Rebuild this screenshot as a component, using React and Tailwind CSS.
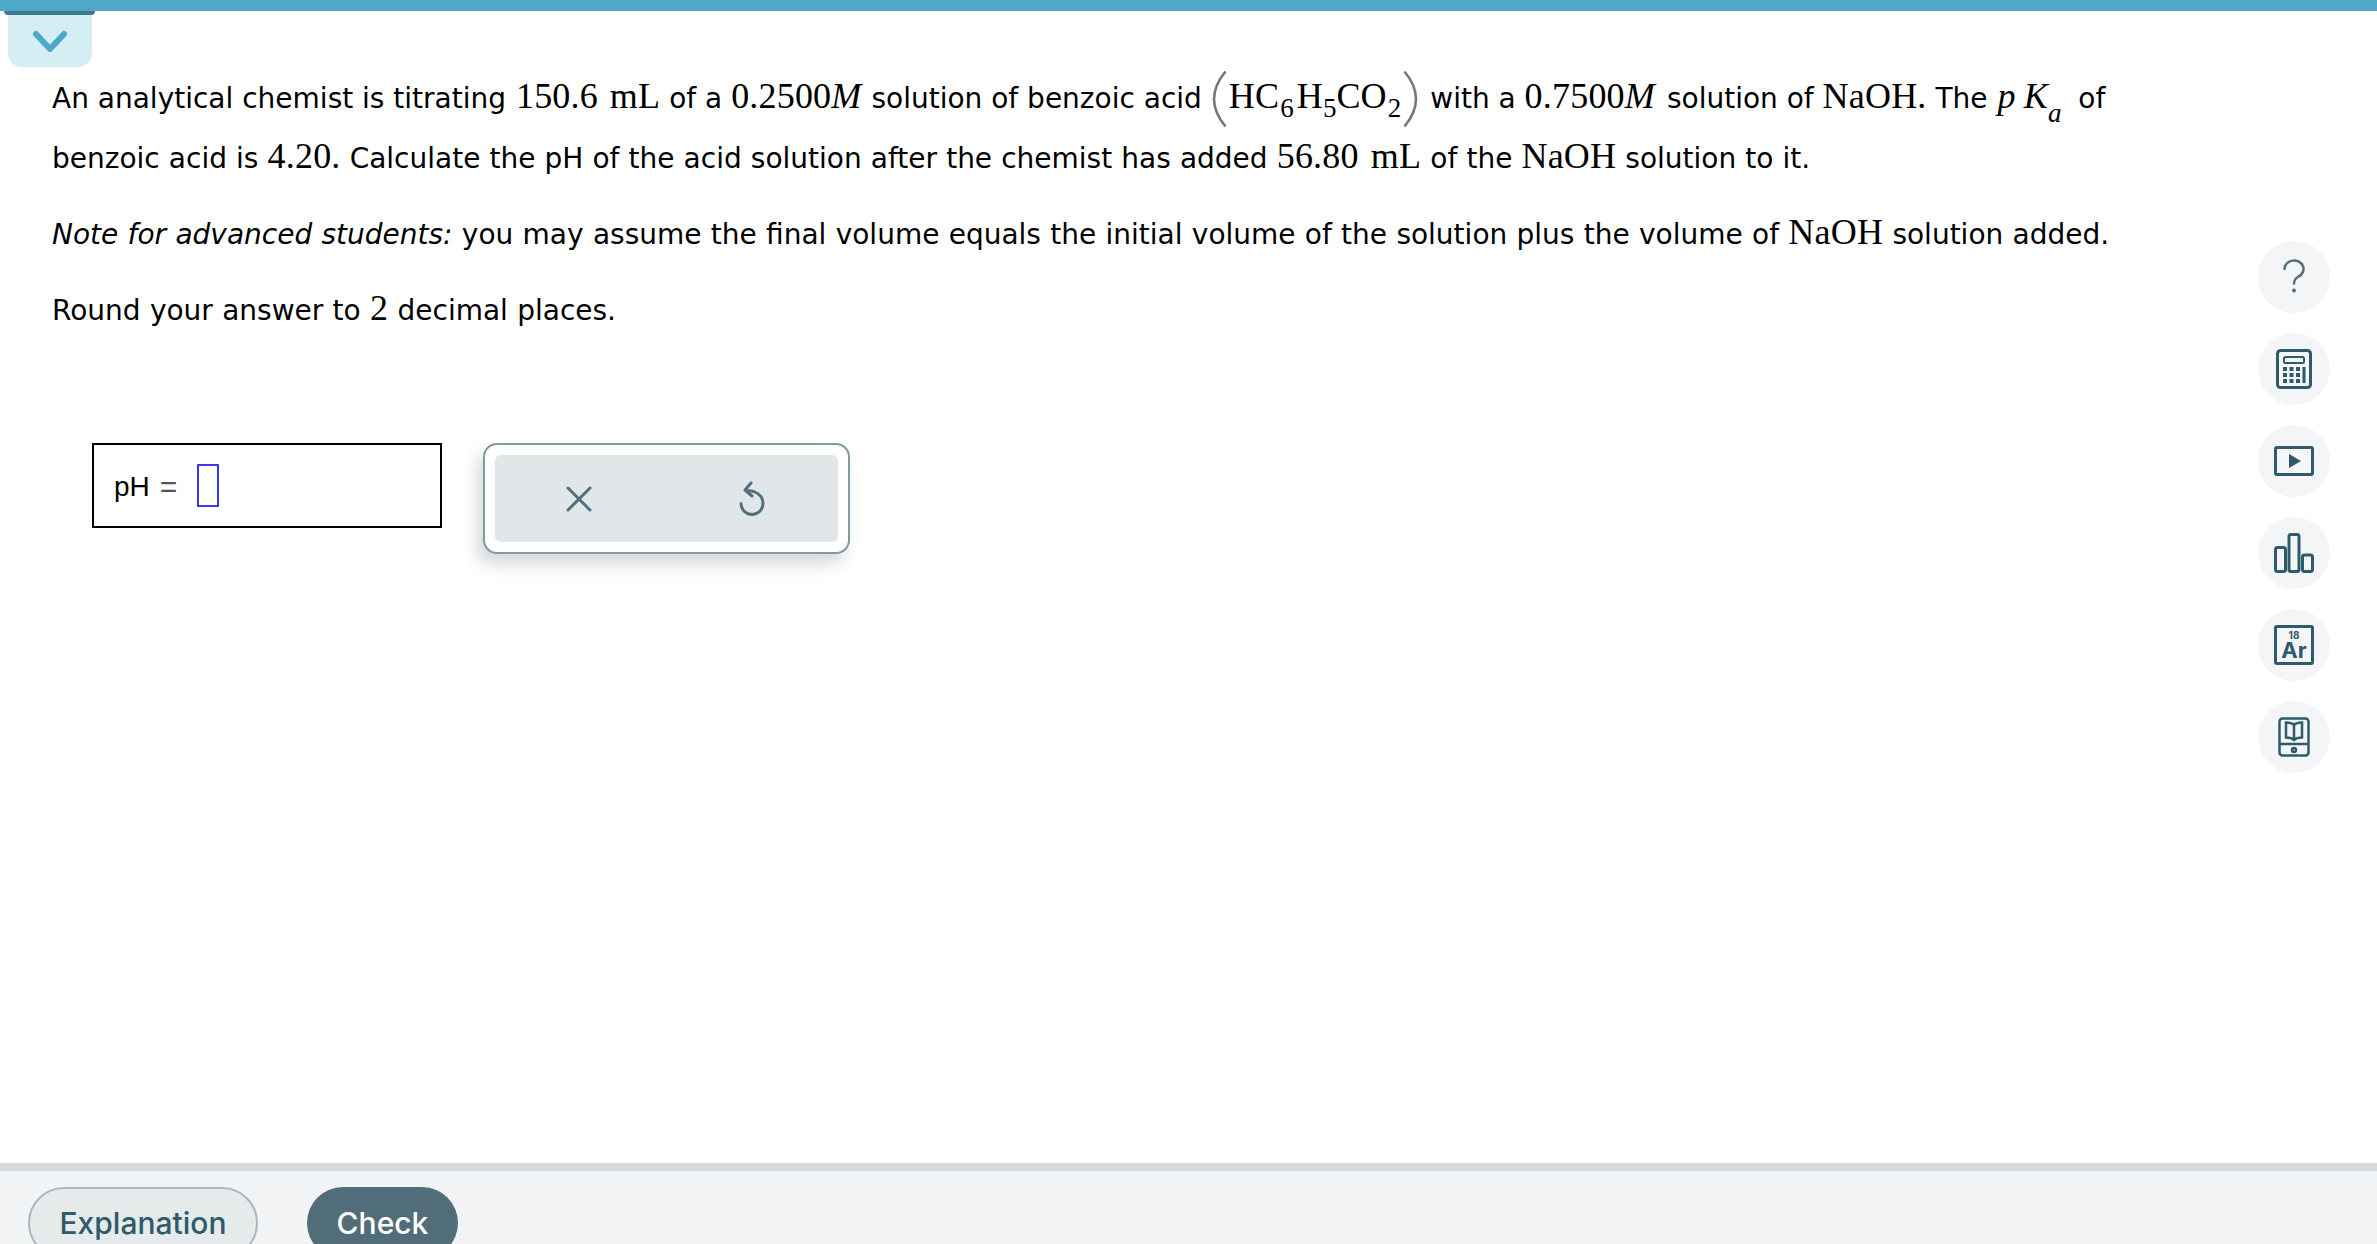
import React from 'react';

const M = ({ children, i, className = '' }) => (
    <span className={`font-['Liberation_Serif',serif] text-[36px] leading-none tracking-[0.2px] ${i ? 'italic' : ''} ${className}`}>{children}</span>
);

const Sub = ({ children, i, className = 'align-[-9px]' }) => (
    <span className={`font-['Liberation_Serif',serif] text-[27px] leading-none ${i ? 'italic' : ''} ${className}`}>
        {children}
    </span>
);

const Paren = ({ flip }) => (
    <svg width="18" height="58" viewBox="0 0 18 58" className={`inline-block align-[-20px] ${flip ? '-scale-x-100' : ''}`}>
        <path d="M14.500 1.500C5 13 3 21 3 29s2 16 11.500 27.500" fill="none" stroke="#777" strokeWidth="2.600" />
    </svg>
);

const RailButton = ({ children }) => (
    <div className="w-[72px] h-[72px] rounded-full bg-[#f3f5f6] flex items-center justify-center text-[#2f5a6b]">
        {children}
    </div>
);

export default function App() {
    return (
        <div className="h-screen overflow-hidden flex flex-col bg-white text-black font-['DejaVu_Sans',sans-serif] text-[28px]">
            <div className="h-[11px] shrink-0 bg-[#4fa8c7]" />

            <div className="flex-1 flex min-h-0">
                <div className="flex-1 min-w-0">
                    <div className="ml-2 w-[84px] h-[56px] bg-[#d4eef4] rounded-b-[14px] flex items-center justify-center relative">
                        <div className="absolute top-0 -left-1 -right-[3px] h-1 bg-[#3b7a91] rounded-b-sm" />
                        <svg width="36" height="24" viewBox="0 0 36 24" className="mt-1">
                            <path d="M4 5l14 15L32 5" fill="none" stroke="#4fa8c7" strokeWidth="6" strokeLinecap="round" strokeLinejoin="round" />
                        </svg>
                    </div>

                    <div className="pl-[52px] pt-[2px] leading-[60px] whitespace-nowrap">
                        <p className="h-[60px]">
                            An analytical chemist is titrating <M className="ml-[1px]">150.6</M> <M className="ml-[3px]">mL</M> of a <M>0.2500</M><M i>M</M> <span className="ml-[1px]">solution</span> of benzoic acid{' '}
                            <Paren /><M>HC</M><Sub className="align-[-9px] ml-[1px] mr-[3px]">6</Sub><M>H</M><Sub>5</Sub><M>CO</M><Sub className="align-[-9px] ml-[1px]">2</Sub><Paren flip /> <span className="ml-[2px]">with</span> a{' '}
                            <M>0.7500</M><M i className="mr-[3px]">M</M> solution of <M>NaOH.</M> The <M i className="ml-[1px]">p</M><M i className="ml-[8px]">K</M><Sub i className="align-[-14px]">a</Sub> <span className="ml-[8px]">of</span>
                        </p>
                        <p className="h-[60px] mb-4 [word-spacing:0.2px]">
                            benzoic acid is <M>4.20.</M> Calculate the pH of the acid solution after the chemist has added{' '}
                            <M>56.80</M> <M className="ml-[3px]">mL</M> of the <M>NaOH</M> solution to it.
                        </p>
                        <p className="h-[60px] mb-4 [word-spacing:0.4px]">
                            <em>Note for advanced students:</em> you may assume the final volume equals the initial volume of the solution plus the volume of <M>NaOH</M> solution added.
                        </p>
                        <p className="h-[60px] [word-spacing:0.4px]">Round your answer to <M>2</M> decimal places.</p>
                    </div>

                    <div className="ml-[92px] mt-[102px] flex items-start gap-[41px]">
                        <div className="w-[350px] h-[85px] border-2 border-black flex items-center pl-[20px]">
                            <span className="font-['Liberation_Sans',sans-serif] text-[28px] mt-[2px]">pH</span>
                            <span className="font-['Liberation_Sans',sans-serif] text-[30px] text-[#555] ml-[10px] mt-[2px]">=</span>
                            <div className="w-[22px] h-[43px] border-2 border-[#3a3af0] ml-[20px]" />
                        </div>
                        <div className="w-[367px] h-[111px] border-2 border-[#84989f] rounded-[14px] p-[10px] bg-white shadow-[-6px_10px_16px_rgba(60,80,90,0.22)]">
                            <div className="h-full rounded-md bg-[#e1e6e8] flex items-center">
                                <div className="flex-1 flex justify-center pr-[4px]">
                                    <svg width="28" height="28" viewBox="0 0 28 28">
                                        <path d="M3 3l22 22M25 3L3 25" stroke="#52707c" strokeWidth="3" strokeLinecap="round" />
                                    </svg>
                                </div>
                                <div className="flex-1 flex justify-center pr-[2px]">
                                    <svg width="28" height="36" viewBox="0 0 28 36">
                                        <path d="M13 2L7 9l7 6M8 9.500c9 0 17 4 17 13a11 11 0 0 1-22 0" fill="none" stroke="#52707c" strokeWidth="3" strokeLinecap="round" strokeLinejoin="round" />
                                    </svg>
                                </div>
                            </div>
                        </div>
                    </div>
                </div>

                <div className="w-[72px] mr-[47px] pt-[230px] flex flex-col gap-5 shrink-0">
                    <RailButton>
                        <svg width="24" height="36" viewBox="0 0 24 36">
                            <path d="M2.500 10a9.500 8.500 0 1 1 14 7.500c-3 1.800-4.500 3.500-4.500 7" fill="none" stroke="#52707c" strokeWidth="2.500" strokeLinecap="round" />
                            <circle cx="12" cy="31.500" r="2" fill="#52707c" />
                        </svg>
                    </RailButton>
                    <RailButton>
                        <svg width="36" height="40" viewBox="0 0 36 40" fill="#2f5a6b">
                            <rect x="1.500" y="1.500" width="33" height="37" rx="3" fill="none" stroke="#2f5a6b" strokeWidth="3" />
                            <rect x="8" y="8" width="20" height="6" rx="1.500" fill="none" stroke="#2f5a6b" strokeWidth="2" />
                            <rect x="7" y="18" width="4" height="4" /><rect x="13.500" y="18" width="4" height="4" /><rect x="20" y="18" width="4" height="4" />
                            <rect x="7" y="24" width="4" height="4" /><rect x="13.500" y="24" width="4" height="4" /><rect x="20" y="24" width="4" height="4" />
                            <rect x="7" y="30" width="4" height="4" /><rect x="13.500" y="30" width="4" height="4" /><rect x="20" y="30" width="4" height="4" />
                            <rect x="26.500" y="18" width="3" height="16" />
                        </svg>
                    </RailButton>
                    <RailButton>
                        <svg width="40" height="30" viewBox="0 0 40 30">
                            <rect x="1.500" y="1.500" width="37" height="27" rx="1.500" fill="none" stroke="#2f5a6b" strokeWidth="3" />
                            <path d="M15 8l12 7-12 7z" fill="#2f5a6b" />
                        </svg>
                    </RailButton>
                    <RailButton>
                        <svg width="40" height="40" viewBox="0 0 40 40" fill="none" stroke="#2f5a6b" strokeWidth="3">
                            <rect x="1.500" y="14.500" width="10" height="24" rx="2" />
                            <rect x="15" y="1.500" width="10" height="37" rx="2" />
                            <rect x="28.500" y="22" width="10" height="16.500" rx="2" />
                        </svg>
                    </RailButton>
                    <RailButton>
                        <div className="w-[40px] h-[40px] border-[3px] border-[#2f5a6b] rounded-[3px] flex flex-col items-center justify-center pt-[1px] font-['Inter',sans-serif] font-bold leading-none">
                            <span className="text-[10px]">18</span>
                            <span className="text-[22px] -mt-[1px]">Ar</span>
                        </div>
                    </RailButton>
                    <RailButton>
                        <svg width="32" height="40" viewBox="0 0 32 40" fill="none" stroke="#2f5a6b" strokeWidth="2.500">
                            <rect x="1.500" y="1.500" width="29" height="37" rx="3" />
                            <path d="M1.500 27h29" />
                            <path d="M16 8c-2-2-5-2.500-8-2.500v15c3 0 6 .5 8 2.500 2-2 5-2.500 8-2.500v-15c-3 0-6 .5-8 2.500zM16 8v15" />
                            <circle cx="16" cy="33" r="2" />
                        </svg>
                    </RailButton>
                </div>
            </div>

            <div className="h-[81px] shrink-0 overflow-hidden border-t-8 border-[#d4dadd] bg-[#f1f3f4] pt-4 pl-7 flex items-start gap-[49px] font-['Inter',sans-serif] text-[30px] font-medium">
                <div className="w-[230px] h-[72px] rounded-full border-2 border-[#a9b9c0] bg-[#e6eaeb] text-[#2f5a6b] flex items-center justify-center">
                    Explanation
                </div>
                <div className="w-[151px] h-[72px] rounded-full bg-[#516d79] text-white flex items-center justify-center">
                    Check
                </div>
            </div>
        </div>
    );
}
